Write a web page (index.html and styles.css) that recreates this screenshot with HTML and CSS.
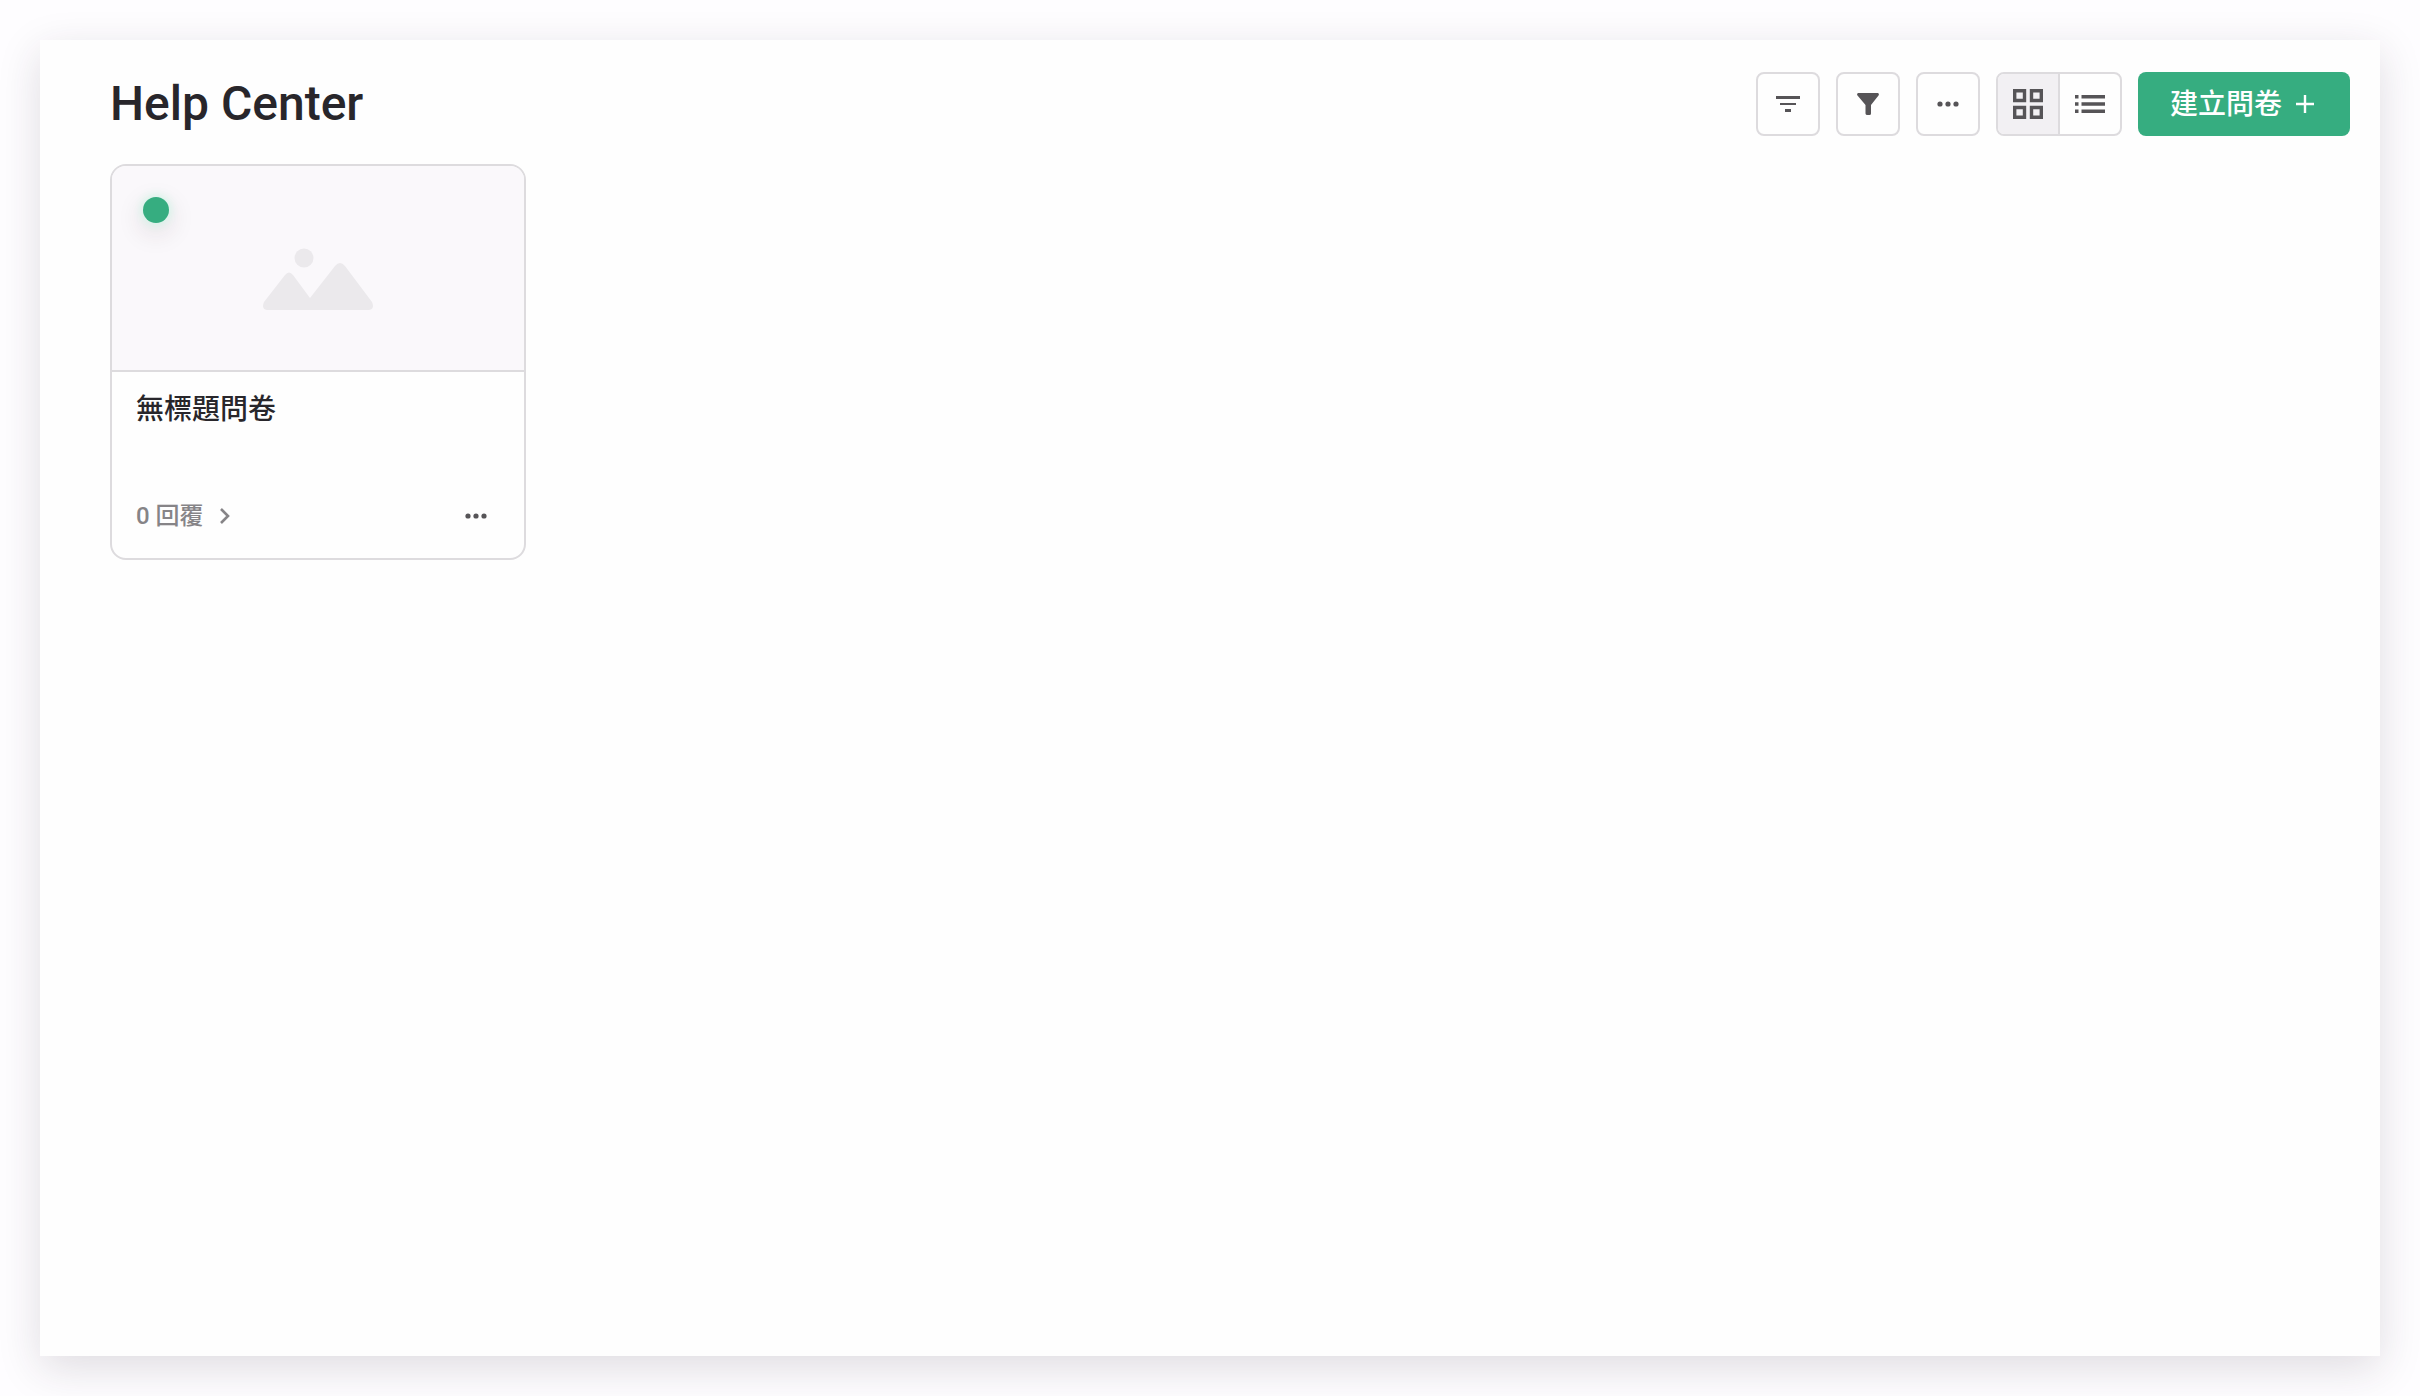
FILE: index.html
```html
<!DOCTYPE html>
<html lang="zh-Hant">
<head>
    <meta charset="UTF-8">
    <meta name="viewport" content="width=device-width, initial-scale=1.0">
    <title>Help Center</title>
    <link rel="stylesheet" href="styles.css">
</head>
<body>
    <div class="panel">
        <header class="panel-header">
            <h1>Help Center</h1>
            <div class="toolbar">
                <button type="button" class="icon-btn" aria-label="排序">
                    <svg width="24" height="16" viewBox="0 0 24 16" fill="currentColor">
                        <path d="M0 0h24v3H0zM4 7h16v2H4zM9 13h6v3H9z"/>
                    </svg>
                </button>
                <button type="button" class="icon-btn" aria-label="篩選">
                    <svg width="22" height="22" viewBox="0 0 22 22" fill="currentColor">
                        <path d="M1.2 0h19.6q1.6.6.9 2.2L14 12v8.5q0 1.5-1.5 1.5h-2Q8.5 22 8.5 20.5V12L.3 2.2Q-.4.6 1.2 0z"/>
                    </svg>
                </button>
                <button type="button" class="icon-btn" aria-label="更多">
                    <svg width="22" height="6" viewBox="0 0 22 6" fill="currentColor">
                        <circle cx="3" cy="3" r="2.6"/><circle cx="11" cy="3" r="2.6"/><circle cx="19" cy="3" r="2.6"/>
                    </svg>
                </button>
                <div class="view-switch">
                    <button type="button" class="active" aria-label="格狀檢視" aria-pressed="true">
                        <svg width="30" height="30" viewBox="0 0 30 30" fill="none" stroke="currentColor" stroke-width="3.4">
                            <path d="M1.7 1.7h9.8v9.8H1.7zM18.500 1.7h9.8v9.8h-9.8zM1.7 18.5h9.8v9.8H1.7zM18.5 18.5h9.8v9.8h-9.8z"/>
                        </svg>
                    </button>
                    <button type="button" aria-label="清單檢視" aria-pressed="false">
                        <svg width="30" height="18" viewBox="0 0 30 18" fill="currentColor">
                            <path d="M0 0h3.5v3.5H0zM6.5 0H30v3.5H6.5zM0 7.2h3.5v3.5H0zM6.5 7.2H30v3.5H6.5zM0 14.5h3.5V18H0zM6.5 14.5H30V18H6.5z"/>
                        </svg>
                    </button>
                </div>
                <button type="button" class="create-btn">
                    <span>建立問卷</span>
                    <svg width="18" height="18" viewBox="0 0 18 18" fill="currentColor">
                        <path d="M7.8 0h2.4v7.8H18v2.4h-7.8V18H7.8v-7.8H0V7.8h7.8z"/>
                    </svg>
                </button>
            </div>
        </header>
        <main class="card-grid">
            <article class="card">
                <div class="card-thumb">
                    <span class="status-dot"></span>
                    <svg width="110" height="62" viewBox="0 0 110 62" fill="currentColor">
                        <circle cx="41" cy="10" r="9.5"/>
                        <path d="M1 54L22 27Q26 22 30 27L47 50L72 18Q77 12 82 18L109 54Q112 61 106 62H4Q-2 61 1 54z"/>
                    </svg>
                </div>
                <div class="card-body">
                    <h2>無標題問卷</h2>
                    <div class="card-footer">
                        <a href="#responses">
                            0 回覆
                            <svg width="10" height="16" viewBox="0 0 10 16" fill="none" stroke="currentColor" stroke-width="2.6">
                                <path d="M1 1l7 7-7 7"/>
                            </svg>
                        </a>
                        <button type="button" class="more-btn" aria-label="更多">
                            <svg width="22" height="6" viewBox="0 0 22 6" fill="currentColor">
                                <circle cx="3" cy="3" r="2.6"/><circle cx="11" cy="3" r="2.6"/><circle cx="19" cy="3" r="2.6"/>
                            </svg>
                        </button>
                    </div>
                </div>
            </article>
        </main>
    </div>
</body>
</html>
```
FILE: styles.css
```css
* {
    box-sizing: border-box;
}
body {
    margin: 0;
    padding: 40px;
    min-height: 100vh;
    display: flex;
    background-color: #fefdff;
    color: #28262b;
    font-family: Roboto, "Noto Sans CJK TC", sans-serif;
}
h1, h2 {
    margin: 0;
    font-weight: 500;
}
svg {
    display: block;
    flex-shrink: 0;
}
button {
    display: flex;
    align-items: center;
    justify-content: center;
    padding: 0;
    border: none;
    background: none;
    color: #565457;
    font-family: inherit;
    cursor: pointer;
}
.panel {
    flex: 1;
    padding: 32px 30px 32px 70px;
    background-color: #fefefe;
    box-shadow: 0 12px 40px rgba(45, 34, 56, 0.15);
}
.panel-header {
    display: flex;
    justify-content: space-between;
    align-items: center;
    margin-bottom: 28px;
}
h1 {
    font-size: 48px;
    line-height: 64px;
}
.toolbar {
    display: flex;
    gap: 16px;
}
.icon-btn {
    width: 64px;
    height: 64px;
    border: 2px solid #dddbde;
    border-radius: 8px;
}
/* Grid / list toggle */
.view-switch {
    display: flex;
    height: 64px;
    border: 2px solid #dddbde;
    border-radius: 8px;
    overflow: hidden;
}
.view-switch button {
    width: 60px;
}
.view-switch button + button {
    width: 62px;
    border-left: 2px solid #dddbde;
}
.view-switch .active {
    background-color: #f2f0f3;
}
.create-btn {
    height: 64px;
    gap: 14px;
    padding: 0 36px 0 32px;
    border-radius: 8px;
    background-color: #36ad80;
    color: #fff;
    font-size: 28px;
    font-weight: 500;
}
.create-btn span {
    padding-bottom: 4px;
}
.card-grid {
    display: grid;
    grid-template-columns: repeat(auto-fill, 416px);
    gap: 32px;
}
.card {
    border: 2px solid #dddbde;
    border-radius: 16px;
    overflow: hidden;
}
.card-thumb {
    position: relative;
    display: flex;
    align-items: center;
    justify-content: center;
    height: 206px;
    padding-top: 22px;
    border-bottom: 2px solid #dddbde;
    background-color: #faf8fb;
    color: #ebe9ec;
}
.status-dot {
    position: absolute;
    top: 31px;
    left: 31px;
    width: 26px;
    height: 26px;
    border-radius: 50%;
    background-color: #36ad80;
    box-shadow: 0 0 8px 2px #d4f5e8, 0 8px 24px 4px rgba(56, 34, 42, 0.1);
}
.card-body {
    padding: 18px 24px 22px;
}
h2 {
    font-size: 28px;
    line-height: 40px;
}
.card-footer {
    display: flex;
    justify-content: space-between;
    align-items: center;
    margin-top: 66px;
}
.card-footer a {
    display: flex;
    align-items: center;
    gap: 16px;
    color: #868487;
    font-size: 24px;
    font-weight: 500;
    line-height: 40px;
    text-decoration: none;
}
.more-btn {
    width: 48px;
    height: 40px;
}
```
